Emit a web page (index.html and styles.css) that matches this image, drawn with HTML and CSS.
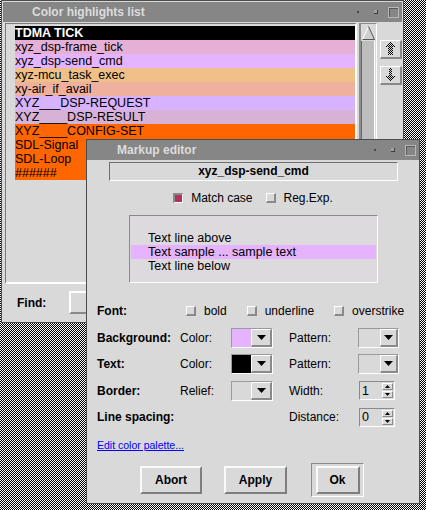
FILE: index.html
```html
<!DOCTYPE html>
<html lang="en">
<head>
<meta charset="utf-8">
<title>Color highlights list</title>
<link rel="stylesheet" href="styles.css">
</head>
<body>
<div class="desktop">
  <section class="win win-list">
    <header class="titlebar">
      <span class="title">Color highlights list</span>
      <span class="tb-btns"><i class="tb-dot"></i><i class="tb-sq"></i><i class="tb-box"></i></span>
    </header>
    <div class="list-main">
      <div class="listbox">
        <div class="item c-tdma">TDMA TICK</div>
        <div class="item c-pink">xyz_dsp-frame_tick</div>
        <div class="item c-lilac">xyz_dsp-send_cmd</div>
        <div class="item c-tan">xyz-mcu_task_exec</div>
        <div class="item c-salmon">xy-air_if_avail</div>
        <div class="item c-lav">XYZ___DSP-REQUEST</div>
        <div class="item c-mauve">XYZ____DSP-RESULT</div>
        <div class="item c-orange">XYZ____CONFIG-SET</div>
        <div class="item c-orange">SDL-Signal</div>
        <div class="item c-orange">SDL-Loop</div>
        <div class="item c-orange">######</div>
      </div>
      <div class="scrollbar">
        <div class="sb-up">
          <svg width="13" height="14" viewBox="0 0 13 14">
            <polygon points="6.5,0.5 12.5,13.5 0.5,13.5" fill="#cfcfcf"/>
            <line x1="0.5" y1="13.5" x2="6.5" y2="0.5" stroke="#fff" stroke-width="1"/>
            <line x1="6.5" y1="0.5" x2="12.5" y2="13.5" stroke="#555" stroke-width="1"/>
            <line x1="0.5" y1="13.5" x2="12.5" y2="13.5" stroke="#555" stroke-width="1"/>
          </svg>
        </div>
        <div class="sb-slider"></div>
      </div>
      <div class="movebtns">
        <button class="mbtn mbtn-up" type="button">
          <svg width="9" height="14" viewBox="0 0 9 14" shape-rendering="crispEdges">
            <defs><pattern id="dith1" width="2" height="2" patternUnits="userSpaceOnUse"><rect width="1" height="1" fill="#000"/><rect x="1" y="1" width="1" height="1" fill="#000"/></pattern></defs>
            <path d="M4.5 0 L9 5 L7 5 L7 13 L2 13 L2 5 L0 5 Z" fill="url(#dith1)"/>
          </svg>
        </button>
        <button class="mbtn mbtn-down" type="button">
          <svg width="9" height="14" viewBox="0 0 9 14" shape-rendering="crispEdges">
            <defs><pattern id="dith2" width="2" height="2" patternUnits="userSpaceOnUse"><rect width="1" height="1" fill="#000"/><rect x="1" y="1" width="1" height="1" fill="#000"/></pattern></defs>
            <path d="M3 0 H6 V8 H9 L4.5 13.5 L0 8 H3 Z" fill="url(#dith2)"/>
          </svg>
        </button>
      </div>
    </div>
    <div class="find-row"><span class="find-label">Find:</span><span class="find-entry"></span></div>
  </section>

  <section class="win win-editor">
    <header class="titlebar">
      <span class="title">Markup editor</span>
      <span class="tb-btns"><i class="tb-dot"></i><i class="tb-sq"></i><i class="tb-box"></i></span>
    </header>
    <div class="ed-body">
      <div class="namebox">xyz_dsp-send_cmd</div>
      <div class="checks">
        <span class="chk"><span class="box on"></span>Match case</span>
        <span class="chk"><span class="box"></span>Reg.Exp.</span>
      </div>
      <div class="sample">
        <div class="sline">Text line above</div>
        <div class="sline hl">Text sample ... sample text</div>
        <div class="sline">Text line below</div>
      </div>
      <div class="form">
        <div class="flabel">Font:</div>
        <div class="fontopts">
          <span class="chk"><span class="box"></span>bold</span>
          <span class="chk"><span class="box"></span>underline</span>
          <span class="chk"><span class="box"></span>overstrike</span>
        </div>

        <div class="flabel">Background:</div>
        <div class="sub">Color:</div>
        <div class="optmenu"><span class="swatch sw-lilac"></span><span class="ombtn"><svg class="tri" width="9" height="5" viewBox="0 0 9 5"><path d="M0 0H9L4.5 5Z"/></svg></span></div>
        <div class="sub">Pattern:</div>
        <div class="optmenu om-pattern"><span class="swatch"></span><span class="ombtn"><svg class="tri" width="9" height="5" viewBox="0 0 9 5"><path d="M0 0H9L4.5 5Z"/></svg></span></div>

        <div class="flabel">Text:</div>
        <div class="sub">Color:</div>
        <div class="optmenu"><span class="swatch sw-black"></span><span class="ombtn"><svg class="tri" width="9" height="5" viewBox="0 0 9 5"><path d="M0 0H9L4.5 5Z"/></svg></span></div>
        <div class="sub">Pattern:</div>
        <div class="optmenu om-pattern"><span class="swatch"></span><span class="ombtn"><svg class="tri" width="9" height="5" viewBox="0 0 9 5"><path d="M0 0H9L4.5 5Z"/></svg></span></div>

        <div class="flabel">Border:</div>
        <div class="sub">Relief:</div>
        <div class="optmenu"><span class="swatch"></span><span class="ombtn"><svg class="tri" width="9" height="5" viewBox="0 0 9 5"><path d="M0 0H9L4.5 5Z"/></svg></span></div>
        <div class="sub">Width:</div>
        <div class="spin"><span class="spin-val">1</span><span class="spin-arrows"><i class="sa"><svg width="5" height="3" viewBox="0 0 5 3"><path d="M0 3H5L2.5 0Z"/></svg></i><i class="sa"><svg width="5" height="3" viewBox="0 0 5 3"><path d="M0 0H5L2.5 3Z"/></svg></i></span></div>

        <div class="flabel">Line spacing:</div>
        <div class="sub sub-dist">Distance:</div>
        <div class="spin"><span class="spin-val">0</span><span class="spin-arrows"><i class="sa"><svg width="5" height="3" viewBox="0 0 5 3"><path d="M0 3H5L2.5 0Z"/></svg></i><i class="sa"><svg width="5" height="3" viewBox="0 0 5 3"><path d="M0 0H5L2.5 3Z"/></svg></i></span></div>
      </div>
      <a class="link" href="#">Edit color palette...</a>
      <div class="buttons">
        <button class="btn btn-abort" type="button">Abort</button>
        <button class="btn btn-apply" type="button">Apply</button>
        <span class="defframe"><button class="btn btn-ok" type="button">Ok</button></span>
      </div>
    </div>
  </section>
</div>
</body>
</html>
```

FILE: styles.css
```css
* { box-sizing: border-box; margin: 0; padding: 0; }
html, body { width: 426px; height: 510px; overflow: hidden; }
body {
  font-family: "Liberation Sans", Arial, sans-serif;
  font-size: 12px;
  color: #000;
  background: repeating-conic-gradient(#000 0 25%, #fff 0 50%) 0 0 / 2px 2px;
}
.desktop { position: relative; width: 426px; height: 510px; }

/* windows */
.win {
  position: absolute;
  display: flex;
  flex-direction: column;
  background: #d9d9d9;
  border: 1px solid #4c4c4c;
}
.win-list { left: 1px; top: 0; width: 403px; height: 323px; padding: 1px; }
.win-editor { left: 86px; top: 139px; width: 334px; height: 365px; }

.titlebar {
  flex: none;
  display: flex;
  align-items: center;
  height: 20px;
  background: #868686;
}
.title {
  flex: 1;
  padding-left: 29px;
  font-weight: bold;
  font-size: 12px;
  color: #dcdcdc;
  white-space: nowrap;
}
.win-editor .title { padding-left: 30px; }
.tb-btns { display: flex; align-items: center; margin-right: 3px; }
.tb-dot { display: block; width: 2px; height: 2px; background: #4a4a4a; }
.tb-sq {
  display: block; width: 4px; height: 4px; margin-left: 15px;
  background: #a0a0a0;
  border-right: 1px solid #3c3c3c; border-bottom: 1px solid #3c3c3c;
}
.tb-box {
  display: block; width: 11px; height: 11px; margin-left: 10px;
  border: 1px solid #b8b8b8;
  box-shadow: inset 1px 1px 0 #5a5a5a;
}

/* list window */
.list-main { flex: none; display: flex; height: 261px; margin-top: 1px; }
.listbox {
  width: 352px;
  margin-left: 2px;
  padding: 2px 0 0 9px;
  border-style: solid;
  border-width: 1px 2px 2px 1px;
  border-color: #7a7a7a #fff #fff #7a7a7a;
}
.item { height: 14px; line-height: 14px; font-size: 12.5px; white-space: nowrap; }
.c-tdma { background: #000; color: #fff; font-weight: bold; }
.c-pink { background: #e6b0d6; }
.c-lilac { background: #e5b4ff; }
.c-tan { background: #f0c088; }
.c-salmon { background: #efb09e; }
.c-lav { background: #d6b2ff; }
.c-mauve { background: #d8b2d6; }
.c-orange { background: #ff6600; }

.scrollbar {
  width: 18px;
  margin-left: 2px;
  display: flex;
  flex-direction: column;
  border-style: solid;
  border-width: 1px 1px 1px 2px;
  border-color: #8c8c8c #fff #fff #8c8c8c;
}
.sb-up { flex: none; height: 17px; display: flex; justify-content: center; align-items: center; }
.sb-slider {
  flex: 1;
  margin: 0 1px 1px 0;
  background: #bdbdbd;
  border-left: 1px solid #6a6a6a;
  border-right: 1px solid #fff;
}
.movebtns { display: flex; flex-direction: column; margin-left: 3px; width: 22px; }
.mbtn {
  height: 19px;
  display: flex;
  align-items: center;
  justify-content: center;
  background: #d9d9d9;
  border-style: solid;
  border-width: 1px 2px 2px 1px;
  border-color: #fff #888 #888 #fff;
}
.mbtn-up { margin-top: 17px; }
.mbtn-down { margin-top: 7px; }

.find-row { flex: 1; display: flex; align-items: center; padding-left: 14px; }
.find-label { width: 52px; font-weight: bold; }
.find-entry {
  width: 300px; height: 23px;
  border-style: solid; border-width: 2px;
  border-color: #fff #8a8a8a #8a8a8a #fff;
}

/* editor */
.ed-body { flex: 1; display: flex; flex-direction: column; align-items: flex-start; }
.namebox {
  margin: 2px 0 0 22px;
  width: 289px; height: 19px;
  line-height: 17px;
  text-align: center;
  font-weight: bold;
  border-style: solid; border-width: 1px;
  border-color: #6e6e6e #fff #fff #6e6e6e;
}
.checks {
  align-self: stretch;
  display: flex; justify-content: center; align-items: center;
  height: 14px; margin-top: 10px;
}
.checks .chk + .chk { margin-left: 13px; }
.chk { display: flex; align-items: center; white-space: nowrap; }
.box {
  flex: none;
  width: 10px; height: 10px; margin-right: 8px;
  background: #d9d9d9;
  border-style: solid; border-width: 1px 2px 2px 1px;
  border-color: #fff #8a8a8a #8a8a8a #fff;
}
.box.on {
  background: #b03060;
  border-width: 2px 1px 1px 2px;
  border-color: #8a8a8a #fff #fff #8a8a8a;
}

.sample {
  margin: 10px 0 0 42px;
  width: 249px; height: 68px;
  padding: 15px 1px 0;
  background: #dddadd;
  border-style: solid; border-width: 1px;
  border-color: #8a8a8a #fff #fff #8a8a8a;
}
.sline { height: 14px; line-height: 14px; padding-left: 17px; font-size: 12.5px; white-space: nowrap; }
.sline.hl { background: #e5b3ff; }

.form {
  display: grid;
  grid-template-columns: 83px 51px 58px 69px 42px;
  grid-auto-rows: 26.5px;
  align-items: center;
  margin: 14.75px 0 0 10px;
}
.flabel { grid-column: 1; font-weight: bold; white-space: nowrap; }
.sub { white-space: nowrap; }
.sub-dist { grid-column: 4; }
.fontopts { grid-column: 2 / -1; display: flex; align-items: center; }
.fontopts .chk:first-child { margin-left: 6px; }
.fontopts .chk + .chk { margin-left: 20px; }

.optmenu {
  display: flex;
  width: 42px; height: 20px;
  border-style: solid; border-width: 1px;
  border-color: #9a9a9a #fff #fff #9a9a9a;
}
.om-pattern { width: 41px; }
.swatch { width: 19px; flex: none; }
.om-pattern .swatch { width: 21px; }
.sw-lilac { background: #e5b3ff; }
.sw-black { background: #000; }
.ombtn {
  flex: 1;
  display: flex; align-items: center; justify-content: center;
  border-style: solid; border-width: 1px 2px 2px 1px;
  border-color: #fff #8a8a8a #8a8a8a #fff;
}
.tri { display: block; }

.spin {
  margin-left: 1px;
  width: 36px; height: 19px;
  display: flex; align-items: center;
  border-style: solid; border-width: 1px;
  border-color: #8a8a8a #fff #fff #8a8a8a;
}
.spin-val { flex: 1; padding-left: 2px; font-size: 12.5px; }
.spin-arrows {
  width: 11px; height: 15px; margin-right: 1px;
  display: flex; flex-direction: column; justify-content: space-between;
}
.sa {
  height: 7px;
  display: flex; align-items: center; justify-content: center;
  border-style: solid; border-width: 1px;
  border-color: #fff #8a8a8a #8a8a8a #fff;
}
.sa svg { display: block; }

.link {
  margin: 7.75px 0 0 10px;
  font-size: 10.5px;
  line-height: 14px;
  color: #0000ff;
  text-decoration: underline;
}

.buttons { display: flex; align-items: center; height: 34px; margin: 11px 0 0 53px; }
.btn {
  height: 28px;
  font: bold 12px "Liberation Sans", Arial, sans-serif;
  color: #000;
  background: #d9d9d9;
  border-style: solid; border-width: 2px;
  border-color: #fafafa #7e7e7e #7e7e7e #fafafa;
}
.btn-abort { width: 62px; }
.btn-apply { width: 63px; margin-left: 22px; }
.defframe {
  display: flex; align-items: center; justify-content: center;
  width: 53px; height: 34px; margin-left: 24px;
  border-style: solid; border-width: 1px;
  border-color: #8a8a8a #fff #fff #8a8a8a;
}
.btn-ok { width: 44px; }
```
